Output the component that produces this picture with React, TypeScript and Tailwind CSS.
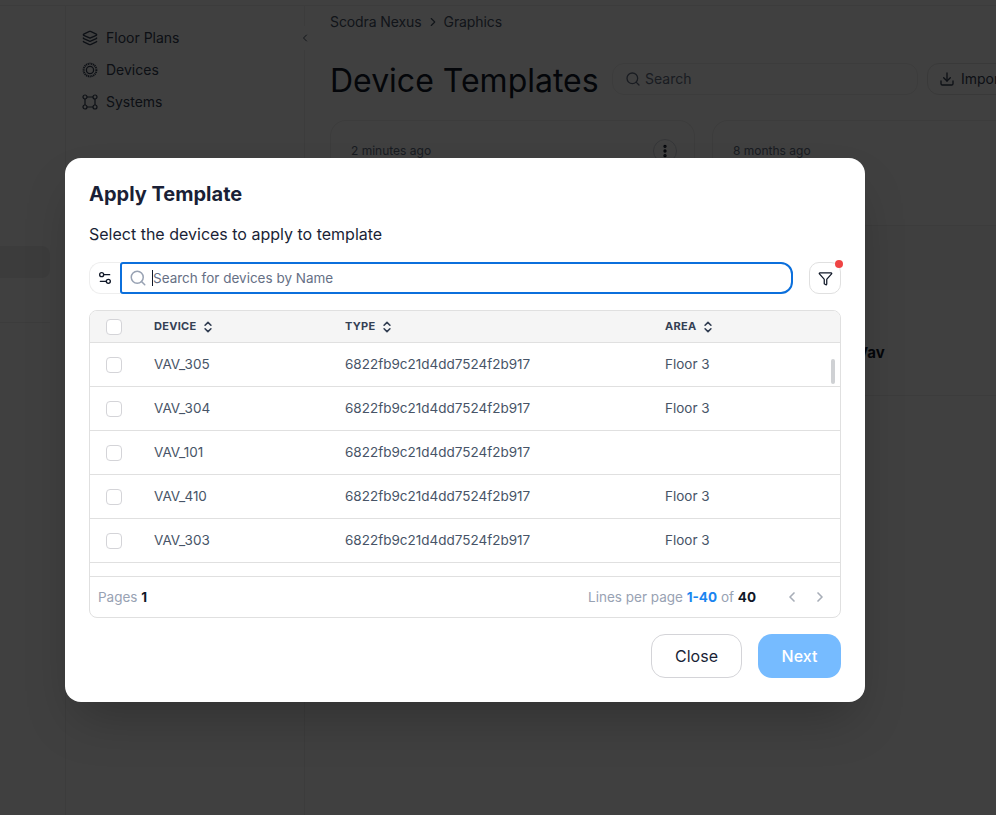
import { ChevronLeft, ChevronRight, ChevronsUpDown, Download, EllipsisVertical, Funnel, Layers, Search, Settings2 } from "lucide-react";

const devices = [
  { name: "VAV_305", area: "Floor 3" },
  { name: "VAV_304", area: "Floor 3" },
  { name: "VAV_101", area: "" },
  { name: "VAV_410", area: "Floor 3" },
  { name: "VAV_303", area: "Floor 3" },
];

const TYPE_ID = "6822fb9c21d4dd7524f2b917";

function ChipIcon() {
  return (
    <svg width="16" height="16" viewBox="0 0 16 16" fill="none" stroke="currentColor" strokeWidth="1.3">
      <circle cx="8" cy="8" r="6.4" strokeDasharray="1.2 0.6" strokeWidth="2" />
      <circle cx="8" cy="8" r="3.6" />
    </svg>
  );
}

function SystemsIcon() {
  return (
    <svg width="16" height="16" viewBox="0 0 16 16" fill="none" stroke="currentColor" strokeWidth="1.2">
      <circle cx="3" cy="3" r="2" />
      <circle cx="13" cy="3" r="2" />
      <circle cx="3" cy="13" r="2" />
      <circle cx="13" cy="13" r="2" />
      <path d="M5 3h6M5 13h6M3 5v6M13 5v6" />
    </svg>
  );
}

function SideItem({ icon, label }: { icon: React.ReactNode; label: string }) {
  return (
    <div className="flex h-8 items-center gap-2 text-sm text-[#344054]">
      <span className="flex w-4 justify-center">{icon}</span>
      {label}
    </div>
  );
}

function Sidebar() {
  return (
    <div className="relative flex w-[305px] shrink-0">
      <div className="flex w-[66px] shrink-0 flex-col border-r border-[#eeeeee] pt-[240px]">
        <div className="h-8 w-[50px] rounded-r-lg bg-[#eeeeee]" />
        <div className="mt-[44px] h-px w-[50px] bg-[#eeeeee]" />
      </div>
      <div className="flex flex-1 flex-col border-r border-[#eeeeee] pl-4 pt-4">
        <SideItem icon={<Layers size={16} />} label="Floor Plans" />
        <SideItem icon={<ChipIcon />} label="Devices" />
        <SideItem icon={<SystemsIcon />} label="Systems" />
      </div>
      <span className="absolute -right-[12px] top-5 flex h-6 w-6 items-center justify-center rounded-full bg-white text-[#475467]">
        <ChevronLeft size={12} />
      </span>
    </div>
  );
}

function TemplateCard({ time }: { time: string }) {
  return (
    <div className="w-[365px] shrink-0 rounded-t-2xl border border-b-0 border-[#eeeeee]">
      <div className="flex h-[105px] items-start justify-between border-b border-[#eeeeee] pl-5 pr-[17px] pt-[18px]">
        <p className="mt-1 text-xs text-[#667085]">{time}</p>
        <span className="flex h-6 w-6 items-center justify-center rounded-full border border-[#d0d5dd] text-[#101828]">
          <EllipsisVertical size={16} strokeWidth={3} />
        </span>
      </div>
      <div className="h-[64px] bg-[#f9f9f9]" />
    </div>
  );
}

function Background() {
  return (
    <div className="flex h-[815px] w-[996px] flex-col overflow-hidden bg-white font-['Inter',sans-serif]">
      <div className="h-[6px] shrink-0 border-b border-[#eeeeee]" />
      <div className="flex flex-1">
        <Sidebar />
        <main className="min-w-0 flex-1 pl-[25px]">
          <div className="flex h-8 items-center gap-1 text-sm tracking-[-0.1px] text-[#475467]">
            Scodra Nexus
            <ChevronRight size={14} />
            Graphics
          </div>
          <div className="mt-4 flex h-[50px] items-center">
            <h1 className="w-[267px] shrink-0 whitespace-nowrap pt-1 text-[32px] font-normal text-[#101828]">Device Templates</h1>
            <div className="ml-[15px] flex h-8 w-[306px] shrink-0 items-center gap-1 rounded-xl border border-[#eeeeee] pl-3 text-sm text-[#667085]">
              <Search size={16} />
              Search
            </div>
            <div className="ml-[9px] flex h-8 w-[100px] shrink-0 items-center gap-1.5 rounded-xl border border-[#e4e4e4] pl-[11px] text-sm text-[#344054]">
              <Download size={16} />
              Import
            </div>
          </div>
          <div className="mt-4 flex gap-[17px]">
            <TemplateCard time="2 minutes ago" />
            <TemplateCard time="8 months ago" />
          </div>
          <div className="ml-[382px] h-[106px] w-[365px] border-b border-[#eeeeee] pl-[145px] pt-[52px] text-[15px] font-bold text-[#101828]">
            Vav
          </div>
        </main>
      </div>
    </div>
  );
}

function Checkbox() {
  return <span className="block h-4 w-4 rounded border border-[#d4d4d8] bg-white" />;
}

function HeaderCell({ label, className }: { label: string; className: string }) {
  return (
    <div className={`flex items-center gap-[5px] text-[11px] font-bold tracking-wide text-[#344054] ${className}`}>
      {label}
      <ChevronsUpDown size={14} strokeWidth={2.75} />
    </div>
  );
}

function DeviceTable() {
  return (
    <div className="mt-4 overflow-hidden rounded-lg border border-[#e0e0e0]">
      <div className="flex h-8 items-center border-b border-[#e0e0e0] bg-[#f5f5f5] pl-4">
        <Checkbox />
        <HeaderCell label="DEVICE" className="ml-8 w-[191px]" />
        <HeaderCell label="TYPE" className="w-[320px]" />
        <HeaderCell label="AREA" className="w-[120px]" />
      </div>
      <div className="relative h-[233px] overflow-hidden">
        {devices.map((d) => (
          <div key={d.name} className="flex h-11 items-center border-b border-[#e0e0e0] pl-4 text-[13.5px] text-[#475467]">
            <Checkbox />
            <span className="ml-8 w-[191px]">{d.name}</span>
            <span className="w-[320px]">{TYPE_ID}</span>
            <span>{d.area}</span>
          </div>
        ))}
        <div className="absolute right-[5px] top-4 h-[25px] w-1 rounded-full bg-[#cfd1d4]" />
      </div>
      <div className="flex h-[41px] items-center justify-between border-t border-[#e0e0e0] pl-2 pr-3 text-[13.5px] text-[#98a2b3]">
        <p>
          Pages <span className="font-bold text-[#101828]">1</span>
        </p>
        <div className="flex items-center">
          <p>
            Lines per page <span className="font-bold text-[#1a85f0]">1-40</span> of{" "}
            <span className="font-bold text-[#101828]">40</span>
          </p>
          <div className="ml-7 flex gap-3 text-[#a8aeb8]">
            <ChevronLeft size={16} strokeWidth={2.5} />
            <ChevronRight size={16} strokeWidth={2.5} />
          </div>
        </div>
      </div>
    </div>
  );
}

function ApplyTemplateModal() {
  return (
    <div className="w-[800px] rounded-2xl bg-white p-6 pt-[22px] shadow-2xl">
      <h2 className="text-xl font-bold leading-[28px] text-[#1a1f36]">Apply Template</h2>
      <p className="mt-[14px] text-base leading-6 text-[#1a1f36]">Select the devices to apply to template</p>

      <div className="mt-4 flex h-8 items-center">
        <button className="flex h-8 w-[31px] shrink-0 items-center justify-center rounded-l-xl border border-r-0 border-[#eeeeee] text-[#101828]">
          <Settings2 size={16} />
        </button>
        <div className="flex h-8 flex-1 items-center rounded-r-xl rounded-l-[3px] border-2 border-[#0b6fdc] pl-[7px] text-[13.5px] text-[#667085]">
          <Search size={18} className="text-[#98a2b3]" />
          <span className="ml-[5px] h-4 w-px bg-[#101828]" />
          Search for devices by Name
        </div>
        <button className="relative ml-4 flex h-8 w-8 shrink-0 items-center justify-center rounded-[10px] border border-[#e0e0e0] text-[#101828]">
          <Funnel size={15} />
          <span className="absolute -right-[3px] -top-[3px] h-2 w-2 rounded-full bg-[#ef4444]" />
        </button>
      </div>

      <DeviceTable />

      <div className="mt-4 flex justify-end gap-4">
        <button className="h-11 w-[91px] rounded-[14px] border border-[#d4d4d8] text-base text-[#1a1f36]">Close</button>
        <button className="h-11 w-[83px] rounded-[14px] bg-[#76bbff] text-base font-medium text-white">Next</button>
      </div>
    </div>
  );
}

export default function App() {
  return (
    <div className="relative h-[815px] w-[996px] overflow-hidden">
      <Background />
      <div className="absolute inset-0 bg-black/75 pl-[65px] pt-[158px] font-['Inter',sans-serif]">
        <ApplyTemplateModal />
      </div>
    </div>
  );
}
